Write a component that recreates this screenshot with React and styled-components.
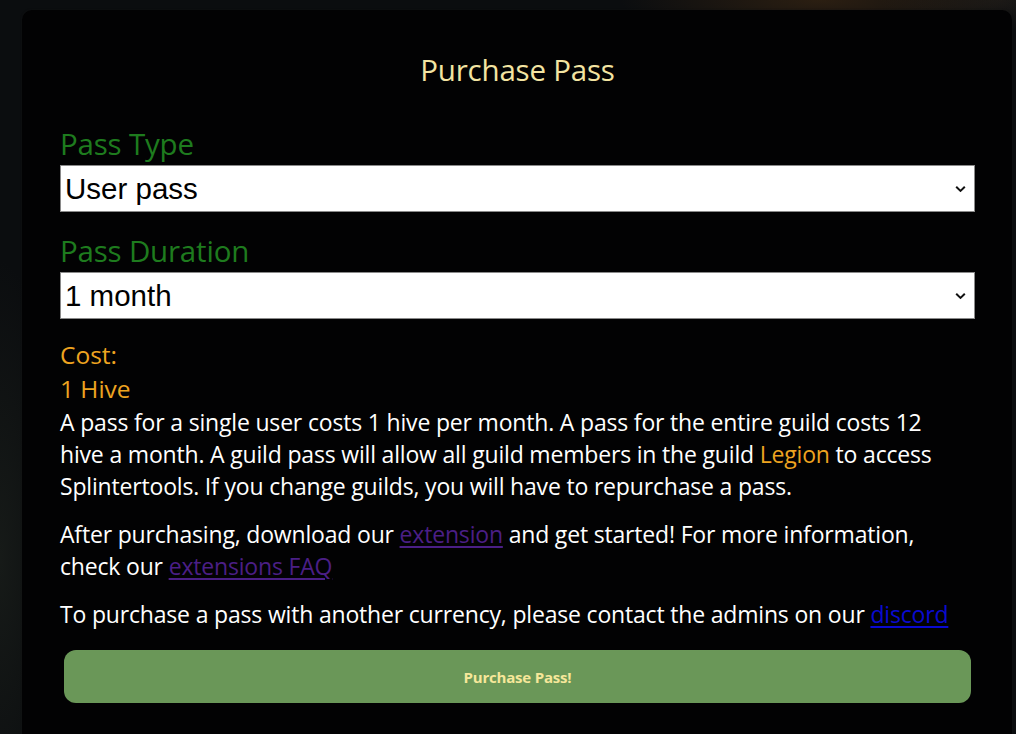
import React from "react";
import styled, { createGlobalStyle } from "styled-components";

const Global = createGlobalStyle`
  html, body { margin: 0; padding: 0; }
  body {
    background:
      radial-gradient(ellipse 200px 40px at 820px 0px, rgba(70,45,20,0.55), transparent),
      radial-gradient(ellipse 120px 30px at 1000px 0px, rgba(40,35,30,0.5), transparent),
      radial-gradient(ellipse 60px 300px at 0px 560px, rgba(30,35,30,0.6), transparent),
      #0b0d0f;
    font-family: "Open Sans", "Noto Sans", sans-serif;
    overflow: hidden;
  }
`;

const Page = styled.div`
  height: 734px;
  overflow: hidden;
  padding: 10px 4px 0 22px;
  box-sizing: border-box;
`;

const Card = styled.div`
  background: #020203;
  border-radius: 10px;
  height: 760px;
  padding: 40px 37px 0 38px;
  box-sizing: border-box;
  box-shadow: 0 0 2px rgba(20, 20, 20, 0.8);
`;

const Title = styled.h2`
  margin: 0 0 33px;
  text-align: center;
  color: #f3e4a2;
  font-size: 29.5px;
  font-weight: 400;
  line-height: 40px;
  letter-spacing: -0.2px;
`;

const Field = styled.div`
  display: flex;
  flex-direction: column;
  margin-bottom: ${(p) => p.$gap}px;
`;

const Label = styled.label`
  color: #1e7b1e;
  font-size: 29.5px;
  line-height: 42px;
  letter-spacing: -0.2px;
`;

const SelectWrap = styled.div`
  position: relative;
  height: 47px;
`;

const Select = styled.select`
  appearance: none;
  -webkit-appearance: none;
  width: 100%;
  height: 100%;
  box-sizing: border-box;
  border: 1px solid #8a8a8a;
  border-radius: 0;
  background: #ffffff;
  color: #000;
  font-family: "Liberation Sans", Arial, sans-serif;
  font-size: 29.5px;
  padding: 0 30px 0 4px;
  outline: none;
`;

const Chevron = styled.svg`
  position: absolute;
  right: 9px;
  top: 50%;
  transform: translateY(-50%);
  pointer-events: none;
`;

const Cost = styled.div`
  color: #eea420;
  font-size: 24.5px;
  line-height: 34px;
`;

const Para = styled.p`
  margin: 0 0 ${(p) => (p.$last ? 0 : 16)}px;
  padding-right: 12px;
  color: #ffffff;
  font-size: 23px;
  line-height: 32px;
  letter-spacing: -0.18px;
`;

const Gold = styled.span`
  color: #eea420;
`;

const Link = styled.a`
  color: ${(p) => p.$color};
  text-decoration: underline;
  text-underline-offset: 3px;
`;

const Button = styled.button`
  display: block;
  width: calc(100% - 8px);
  margin: 20px 0 0 4px;
  height: 53px;
  border: none;
  border-radius: 12px;
  background: #6a9758;
  color: #f6e79a;
  font-family: "Open Sans", sans-serif;
  font-weight: 700;
  font-size: 15px;
  letter-spacing: -0.2px;
  cursor: pointer;
`;

function Dropdown({ value, options }) {
  return (
    <SelectWrap>
      <Select defaultValue={value}>
        {options.map((o) => (
          <option key={o}>{o}</option>
        ))}
      </Select>
      <Chevron width="11" height="7" viewBox="0 0 11 7">
        <path d="M1.2 1.2 L5.5 5.4 L9.8 1.2" fill="none" stroke="#111" strokeWidth="2" />
      </Chevron>
    </SelectWrap>
  );
}

export default function App() {
  return (
    <>
      <Global />
      <Page>
        <Card>
          <Title>Purchase Pass</Title>
          <Field $gap={18}>
            <Label>Pass Type</Label>
            <Dropdown value="User pass" options={["User pass", "Guild pass"]} />
          </Field>
          <Field $gap={19}>
            <Label>Pass Duration</Label>
            <Dropdown value="1 month" options={["1 month", "3 months", "6 months", "12 months"]} />
          </Field>
          <Cost>Cost:</Cost>
          <Cost>1 Hive</Cost>
          <Para>
            A pass for a single user costs 1 hive per month. A pass for the entire guild costs 12
            hive a month. A guild pass will allow all guild members in the guild <Gold>Legion</Gold> to
            access Splintertools. If you change guilds, you will have to repurchase a pass.
          </Para>
          <Para>
            After purchasing, download our <Link $color="#4b1f86" href="#">extension</Link> and get
            started! For more information, check our{" "}
            <Link $color="#4b1f86" href="#">extensions FAQ</Link>
          </Para>
          <Para $last>
            To purchase a pass with another currency, please contact the admins on our{" "}
            <Link $color="#0a0ad0" href="#">discord</Link>
          </Para>
          <Button>Purchase Pass!</Button>
        </Card>
      </Page>
    </>
  );
}
